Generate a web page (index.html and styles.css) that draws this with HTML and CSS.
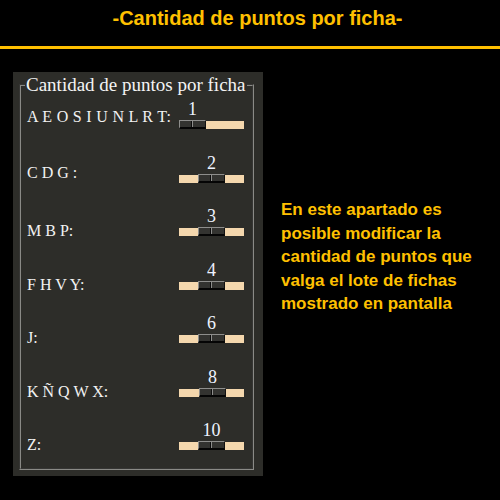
FILE: index.html
```html
<!DOCTYPE html>
<html lang="es">
<head>
<meta charset="utf-8">
<title>Cantidad de puntos por ficha</title>
<link rel="stylesheet" href="styles.css">
</head>
<body>
<header class="header">
  <h1 class="title">-Cantidad de puntos por ficha-</h1>
</header>
<main class="main">
  <section class="panel">
    <fieldset class="group">
      <legend class="legend">Cantidad de puntos por ficha</legend>
      <div class="row">
        <span class="label label-wide label-up1">A E O S I U N L R T:</span>
        <div class="slider" style="padding-left:0px">
          <div class="knob"><span class="value">1</span><span class="thumb"></span></div>
        </div>
      </div>
      <div class="row">
        <span class="label label-up2">C D G :</span>
        <div class="slider" style="padding-left:19px">
          <div class="knob"><span class="value">2</span><span class="thumb"></span></div>
        </div>
      </div>
      <div class="row">
        <span class="label">M B P:</span>
        <div class="slider" style="padding-left:19px">
          <div class="knob"><span class="value">3</span><span class="thumb"></span></div>
        </div>
      </div>
      <div class="row">
        <span class="label">F H V Y:</span>
        <div class="slider" style="padding-left:19px">
          <div class="knob"><span class="value">4</span><span class="thumb"></span></div>
        </div>
      </div>
      <div class="row">
        <span class="label">J:</span>
        <div class="slider" style="padding-left:19px">
          <div class="knob"><span class="value">6</span><span class="thumb"></span></div>
        </div>
      </div>
      <div class="row">
        <span class="label">K Ñ Q W X:</span>
        <div class="slider" style="padding-left:20px">
          <div class="knob"><span class="value">8</span><span class="thumb"></span></div>
        </div>
      </div>
      <div class="row">
        <span class="label">Z:</span>
        <div class="slider" style="padding-left:19px">
          <div class="knob"><span class="value">10</span><span class="thumb"></span></div>
        </div>
      </div>
    </fieldset>
  </section>
  <p class="info">En este apartado es<br>posible modificar la<br>cantidad de puntos que<br>valga el lote de fichas<br>mostrado en pantalla</p>
</main>
</body>
</html>
```

FILE: styles.css
```css
* { box-sizing: border-box; }

html, body {
  margin: 0;
  padding: 0;
  background: #000;
}

body {
  width: 500px;
  height: 500px;
  overflow: hidden;
  font-family: "Liberation Sans", Arial, sans-serif;
}

.header {
  height: 49px;
  padding-top: 6px;
  padding-left: 15px;
  border-bottom: 3px solid #ffc000;
}

.title {
  margin: 0;
  font-size: 20px;
  line-height: 24px;
  font-weight: bold;
  color: #ffc000;
  text-align: center;
}

.main {
  display: flex;
  align-items: flex-start;
  padding-top: 23px;
  padding-left: 13px;
}

.panel {
  width: 250px;
  height: 404px;
  background: #2d2d29;
  padding: 2px 9px 6px 6px;
}

.group {
  margin: 0;
  height: 100%;
  border: 2px groove #8a8a86;
  padding: 3px 1px 18px 6px;
  display: flex;
  flex-direction: column;
  gap: 23.5px;
  font-family: "Liberation Serif", "Times New Roman", serif;
  color: #f2f2f2;
}

.legend {
  margin-left: -2px;
  padding: 0 1px;
  font-size: 19px;
  line-height: 22px;
  white-space: nowrap;
  color: #f4f4f4;
}

.row {
  display: flex;
  justify-content: space-between;
  align-items: flex-end;
  height: 30px;
  padding-right: 7px;
}

.label {
  font-size: 16px;
  line-height: 16px;
  margin-bottom: -3px;
  white-space: nowrap;
}

.label-wide { letter-spacing: 0.3px; }
.label-up1 { margin-bottom: 4px; }
.label-up2 { margin-bottom: 2px; }

.slider {
  width: 65px;
  display: flex;
  background: linear-gradient(#f4d7ad, #f4d7ad) left bottom / 100% 8px no-repeat;
}

.knob {
  width: 27px;
  display: flex;
  flex-direction: column;
  align-items: center;
}

.value {
  font-size: 18px;
  line-height: 20px;
  height: 20px;
  margin-bottom: 1px;
  color: #eef3ff;
}

.thumb {
  position: relative;
  width: 27px;
  height: 9px;
  background: #333330;
  border-style: solid;
  border-width: 1px 1px 2px 1px;
  border-color: #8e8e8c #111 #050505 #8e8e8c;
}

.thumb::after {
  content: "";
  position: absolute;
  left: 11px;
  top: 0;
  bottom: 0;
  width: 2px;
  background: linear-gradient(to right, #0c0c0c 50%, #8e8e8c 50%);
}

.info {
  margin: 126px 0 0 18px;
  font-size: 17px;
  line-height: 23.5px;
  font-weight: bold;
  color: #ffc000;
  white-space: nowrap;
}
```
